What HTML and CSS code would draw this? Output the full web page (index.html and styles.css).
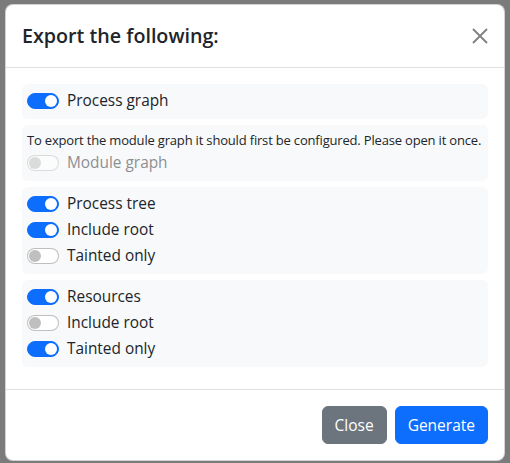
FILE: index.html
```html
<!DOCTYPE html>
<html lang="en">
<head>
<meta charset="utf-8">
<title>Export</title>
<link rel="stylesheet" href="styles.css">
</head>
<body>
<div class="modal">
  <div class="modal-header">
    <h5 class="modal-title">Export the following:</h5>
    <button class="btn-close" aria-label="Close">
      <svg viewBox="0 0 16 16" width="16" height="16"><path d="M1 1 L15 15 M15 1 L1 15" stroke="#7f7f7f" stroke-width="1.8" fill="none"/></svg>
    </button>
  </div>
  <div class="modal-body">
    <div class="group">
      <label class="check"><span class="switch on"></span><span>Process graph</span></label>
    </div>
    <div class="group">
      <div class="hint">To export the module graph it should first be configured. Please open it once.</div>
      <label class="check disabled"><span class="switch"></span><span>Module graph</span></label>
    </div>
    <div class="group">
      <label class="check"><span class="switch on"></span><span>Process tree</span></label>
      <label class="check"><span class="switch on"></span><span>Include root</span></label>
      <label class="check"><span class="switch"></span><span>Tainted only</span></label>
    </div>
    <div class="group">
      <label class="check"><span class="switch on"></span><span>Resources</span></label>
      <label class="check"><span class="switch"></span><span>Include root</span></label>
      <label class="check"><span class="switch on"></span><span>Tainted only</span></label>
    </div>
  </div>
  <div class="modal-footer">
    <button class="btn btn-secondary">Close</button>
    <button class="btn btn-primary">Generate</button>
  </div>
</div>
</body>
</html>
```

FILE: styles.css
```css
* { box-sizing: border-box; }
html, body { height: 100%; }
body {
  margin: 0;
  padding: 4px 5px 0 5px;
  background: #7b7b7b;
  font-family: "Open Sans", "Noto Sans", sans-serif;
  color: #212529;
  font-size: 15.4px;
  line-height: 24px;
}
.modal {
  width: 500px;
  background: #fff;
  border: 1px solid rgba(0,0,0,0.175);
  border-radius: 8px;
  overflow: hidden;
}
.modal-header {
  display: flex;
  align-items: center;
  justify-content: space-between;
  padding: 16px;
  border-bottom: 1px solid #dee2e6;
}
.modal-title {
  margin: 0;
  font-size: 19.7px;
  font-weight: 600;
  line-height: 30px;
}
.btn-close {
  border: 0;
  background: transparent;
  padding: 0;
  width: 16px;
  height: 16px;
  display: flex;
}
.modal-body {
  padding: 16px;
}
.group {
  background: #f8f9fa;
  border-radius: 6px;
  padding: 5px 5px 4px 5px;
  margin-bottom: 6px;
}
.hint {
  font-size: 13px;
  letter-spacing: -0.18px;
  line-height: 21px;
  white-space: nowrap;
}
.check {
  display: flex;
  align-items: center;
  height: 24px;
  margin-bottom: 2px;
}
.switch {
  position: relative;
  width: 32px;
  height: 16px;
  border-radius: 8px;
  border: 1px solid rgba(0,0,0,0.25);
  background: #fff;
  margin-right: 8px;
  flex: none;
}
.switch::after {
  content: "";
  position: absolute;
  top: 1px;
  left: 1px;
  width: 12px;
  height: 12px;
  border-radius: 50%;
  background: #bfbfbf;
}
.switch.on {
  background: #0d6efd;
  border-color: #0d6efd;
}
.switch.on::after {
  left: auto;
  right: 1px;
  background: #fff;
}
.check.disabled { opacity: 0.5; }
.modal-footer {
  display: flex;
  justify-content: flex-end;
  padding: 12px;
  border-top: 1px solid #dee2e6;
}
.btn {
  margin: 4px;
  font-family: inherit;
  font-size: 15.5px;
  line-height: 24px;
  padding: 6px 12px;
  border: 1px solid transparent;
  border-radius: 6px;
  color: #fff;
}
.btn-secondary { background: #6c757d; border-color: #6c757d; }
.btn-primary { background: #0d6efd; border-color: #0d6efd; }
```
